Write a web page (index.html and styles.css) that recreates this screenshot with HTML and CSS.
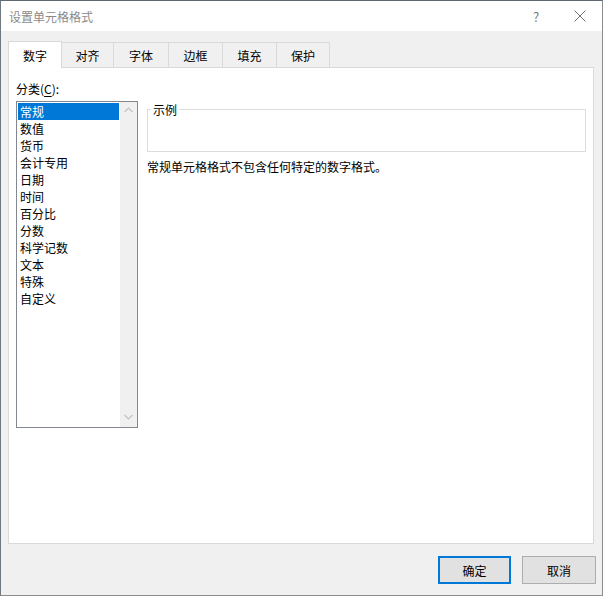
FILE: index.html
```html
<!DOCTYPE html>
<html lang="zh-CN">
<head>
  <meta charset="UTF-8">
  <title>设置单元格格式</title>
  <link rel="stylesheet" href="styles.css">
</head>
<body>
  <div class="dialog">
    <header class="titlebar">
      <span class="title">设置单元格格式</span>
      <span class="help">?</span>
      <span class="close">
        <svg width="12" height="12" viewBox="0 0 12 12"><path d="M0.5 0.5L11.5 11.5M11.5 0.5L0.5 11.5" stroke="#6e6e6e" stroke-width="1" fill="none"/></svg>
      </span>
    </header>

    <ul class="tabs">
      <li class="tab active">数字</li>
      <li class="tab">对齐</li>
      <li class="tab">字体</li>
      <li class="tab">边框</li>
      <li class="tab">填充</li>
      <li class="tab">保护</li>
    </ul>

    <section class="panel">
      <div class="category">
        <label class="label">分类(<u>C</u>):</label>
        <div class="listbox">
          <ul class="list">
            <li class="selected">常规</li>
            <li>数值</li>
            <li>货币</li>
            <li>会计专用</li>
            <li>日期</li>
            <li>时间</li>
            <li>百分比</li>
            <li>分数</li>
            <li>科学记数</li>
            <li>文本</li>
            <li>特殊</li>
            <li>自定义</li>
          </ul>
          <div class="scrollbar">
            <svg width="9" height="6" viewBox="0 0 9 6"><path d="M0.5 5L4.5 1L8.5 5" stroke="#c2c2c2" stroke-width="1.2" fill="none"/></svg>
            <svg width="9" height="6" viewBox="0 0 9 6"><path d="M0.5 1L4.5 5L8.5 1" stroke="#c2c2c2" stroke-width="1.2" fill="none"/></svg>
          </div>
        </div>
      </div>

      <div class="detail">
        <fieldset class="sample">
          <legend>示例</legend>
        </fieldset>
        <p class="desc">常规单元格格式不包含任何特定的数字格式。</p>
      </div>
    </section>

    <footer class="buttons">
      <button class="btn primary">确定</button>
      <button class="btn">取消</button>
    </footer>
  </div>
</body>
</html>
```

FILE: styles.css
```css
*{
  padding: 0;
  margin: 0;
  box-sizing: border-box;
}
html, body{
  background: #f0f0f0;
}
body{
  font-family: "Noto Sans CJK SC", "Liberation Sans", sans-serif;
  font-size: 12px;
  line-height: 17px;
  color: #000;
}
.dialog{
  width: 603px;
  height: 596px;
  background: #f0f0f0;
  border: 1px solid #8c8c8c;
  border-top-color: #5d6874;
  border-left-color: #6f7780;
}
.titlebar{
  height: 30px;
  background: #fff;
  display: flex;
  align-items: center;
  padding-left: 8px;
}
.title{
  color: #8a8a8a;
  flex: 1;
}
.help{
  color: #7a7a7a;
  font-size: 13px;
  width: 20px;
  text-align: center;
  margin-right: 24px;
}
.close{
  width: 20px;
  display: flex;
  justify-content: center;
  margin-right: 12px;
}
.tabs{
  list-style: none;
  display: flex;
  align-items: flex-end;
  margin-top: 10px;
  padding-left: 7px;
  height: 26px;
  position: relative;
  z-index: 1;
}
.tab{
  width: 54px;
  height: 25px;
  border: 1px solid #d9d9d9;
  border-bottom: none;
  border-left: none;
  text-align: center;
  padding-top: 4px;
  color: #000;
}
.tab:nth-child(2){
  width: 52px;
}
.tab:nth-child(3){
  width: 55px;
}
.tab:nth-child(6){
  width: 53px;
}
.tab.active{
  background: #fff;
  border-left: 1px solid #d9d9d9;
  height: 27px;
  margin-bottom: -1px;
  padding-top: 5px;
}
.panel{
  margin-left: 7px;
  width: 586px;
  height: 477px;
  background: #fff;
  border: 1px solid #d9d9d9;
  display: flex;
  gap: 9px;
  padding: 12px 7px 0 7px;
}
.label{
  display: block;
  margin-bottom: 4px;
}
.label u{
  text-decoration-thickness: 1px;
  text-underline-offset: 2px;
}
.listbox{
  width: 122px;
  height: 327px;
  border: 1px solid #828790;
  display: flex;
  padding: 1px 0 0 1px;
}
.list{
  list-style: none;
  flex: 1;
  padding-right: 1px;
}
.list li{
  height: 17px;
  padding-left: 2px;
}
.list .selected{
  background: #0078d7;
  color: #fff;
}
.scrollbar{
  width: 17px;
  background: #f0f0f0;
  margin-top: -1px;
  display: flex;
  flex-direction: column;
  justify-content: space-between;
  align-items: center;
  padding: 5px 0 7px;
}
.detail{
  padding-top: 21px;
}
.sample{
  width: 439px;
  height: 51px;
  border: 1px solid #dcdcdc;
}
.sample legend{
  margin-left: 3px;
  padding: 0 2px;
  line-height: 17px;
}
.desc{
  margin-top: 6px;
}
.buttons{
  display: flex;
  justify-content: flex-end;
  gap: 11px;
  padding: 12px 6px 0 0;
}
.btn{
  width: 74px;
  height: 28px;
  font-family: inherit;
  font-size: 12px;
  background: #e1e1e1;
  border: 1px solid #adadad;
  color: #000;
}
.btn.primary{
  width: 73px;
  border: 2px solid #0078d7;
}
```
